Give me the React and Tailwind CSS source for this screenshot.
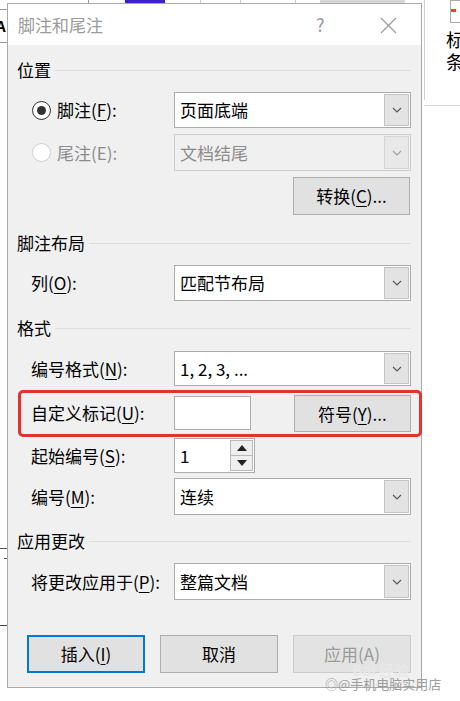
import React from "react";

const FONT = "font-[family-name:'Noto_Sans_CJK_SC','Noto_Sans',sans-serif]";

function U({ children }) {
  return <span className="underline decoration-1 underline-offset-[3px]">{children}</span>;
}

function Chevron({ disabled }) {
  return (
    <svg width="10" height="6" viewBox="0 0 10 6">
      <path d="M1 1 L5 5 L9 1" stroke={disabled ? "#a0a0a0" : "#555555"} fill="none" strokeWidth="1.1" />
    </svg>
  );
}

function Select({ text, disabled, h = "h-[36px]" }) {
  return (
    <div
      className={`relative flex ${h} w-[239px] items-center border pl-[5px] ${
        disabled ? "border-[#cdcdcd] bg-[#f0f0f0] text-[#8c8c8c]" : "border-[#ababab] bg-white text-black"
      }`}
    >
      <span>{text}</span>
      <div
        className={`absolute right-[1px] top-[1px] bottom-[1px] flex w-[25px] items-center justify-center border ${
          disabled ? "border-[#d4d4d4] bg-[#e8e8e8]" : "border-[#c4c4c4] bg-[#e3e3e3]"
        }`}
      >
        <Chevron disabled={disabled} />
      </div>
    </div>
  );
}

function Header({ children }) {
  return (
    <div className="flex h-[24px] items-center">
      <span className="leading-[24px] text-black">{children}</span>
      <div className="ml-[4px] h-px flex-1 bg-[#dcdcdc]" />
    </div>
  );
}

function Row({ label, children, mt, h }) {
  return (
    <div className={`flex items-center pl-[13px] ${mt} ${h}`}>
      <div className="w-[143px] shrink-0 text-black">{label}</div>
      {children}
    </div>
  );
}

function Btn({ children, className = "" }) {
  return (
    <div className={`flex items-center justify-center border border-[#adadad] bg-[#e1e1e1] text-black ${className}`}>
      {children}
    </div>
  );
}

export default function App() {
  return (
    <div className={`relative h-[701px] w-[460px] overflow-hidden bg-white text-[17px] ${FONT}`}>
      {/* background document behind dialog */}
      <div className="absolute left-[88px] top-0 h-[4px] w-px bg-[#9a9a9a]" />
      <div className="absolute left-[125px] top-0 h-[4px] w-[40px] bg-[#3b1fd1]" />
      <div className="absolute left-[200px] top-0 h-[4px] w-px bg-[#c8c8c8]" />
      <div className="absolute left-[240px] top-0 h-[4px] w-px bg-[#c8c8c8]" />
      <div className="absolute left-[295px] top-0 h-[4px] w-px bg-[#c8c8c8]" />
      <div className="absolute left-[320px] top-0 h-[3px] w-[85px] bg-[#d6d6d6]" />
      <div className="absolute left-0 top-[9px] h-px w-[8px] bg-[#9a9a9a]" />
      <div className="absolute left-0 top-[42px] h-px w-[8px] bg-[#9a9a9a]" />
      <div className="absolute left-[-4px] top-[16px] text-[15px] font-bold leading-[20px] text-black">A</div>
      <div className="absolute left-0 top-[548px] h-px w-[7px] bg-[#555]" />
      <div className="absolute left-[4px] top-[558px] h-px w-[3px] bg-[#555]" />
      <div className="absolute left-0 top-[625px] h-px w-[7px] bg-[#444]" />

      <div className="absolute left-[424px] top-0 h-[100px] w-px bg-[#d0d0d0]" />
      <div className="absolute left-[424px] top-[105px] h-px w-[40px] bg-[#d8d8d8]" />
      <div className="absolute left-[450px] top-0 h-[23px] w-[14px] border border-[#aaaaaa] bg-white" />
      <div className="absolute left-[451px] top-[9px] h-[3px] w-[5px] bg-[#e04a2a]" />
      <div className="absolute left-[446px] top-[28px] text-[18px] leading-[22px] text-black">标</div>
      <div className="absolute left-[446px] top-[50px] text-[18px] leading-[22px] text-black">条</div>

      {/* dialog window */}
      <div className="absolute left-[7px] top-[3px] flex h-[685px] w-[415px] flex-col border border-[#a9a9a9] bg-[#f0f0f0]">
        <div className="relative flex h-[41px] shrink-0 items-center bg-white pl-[10px]">
          <span className="text-[17px] text-[#9b9b9b]">脚注和尾注</span>
          <span className="absolute left-[308px] top-[8px] text-[18px] leading-[24px] text-[#9b9b9b]">?</span>
          <svg className="absolute left-[372px] top-[13px]" width="17" height="17" viewBox="0 0 17 17">
            <path d="M1 1 L16 16 M16 1 L1 16" stroke="#9b9b9b" strokeWidth="1.2" />
          </svg>
        </div>

        <div className="flex flex-1 flex-col px-[10px]">
          <div className="mt-[13px] -ml-px">
            <Header>位置</Header>
          </div>

          <div className="mt-[10px] flex h-[36px] items-center pl-[14px]">
            <div className="flex w-[142px] shrink-0 items-center">
              <div className="flex h-[19px] w-[19px] items-center justify-center rounded-full border-[1.5px] border-[#333333] bg-white">
                <div className="h-[9px] w-[9px] rounded-full bg-[#333333]" />
              </div>
              <span className="ml-[6px] text-black">
                脚注(<U>F</U>):
              </span>
            </div>
            <Select text="页面底端" />
          </div>

          <div className="mt-[6px] flex h-[37px] items-center pl-[14px]">
            <div className="flex w-[142px] shrink-0 items-center">
              <div className="h-[19px] w-[19px] rounded-full border border-[#d0d0d0] bg-white" />
              <span className="ml-[6px] text-[#8c8c8c]">尾注(E):</span>
            </div>
            <Select text="文档结尾" disabled h="h-[37px]" />
          </div>

          <div className="mt-[6px] flex h-[38px] justify-end pr-px">
            <Btn className="w-[117px]">
              转换(<U>C</U>)...
            </Btn>
          </div>

          <div className="mt-[16px] -ml-px">
            <Header>脚注布局</Header>
          </div>

          <Row mt="mt-[10px]" h="h-[36px]" label={<>列(<U>O</U>):</>}>
            <Select text="匹配节布局" />
          </Row>

          <div className="mt-[15px] -ml-px">
            <Header>格式</Header>
          </div>

          <Row mt="mt-[11px]" h="h-[35px]" label={<>编号格式(<U>N</U>):</>}>
            <Select text="1, 2, 3, ..." h="h-[35px]" />
          </Row>

          <div className="relative mt-[10px] flex h-[36px] items-start pl-[13px]">
            <div className="flex h-[34px] w-[143px] shrink-0 items-center text-black">
              自定义标记(<U>U</U>):
            </div>
            <div className="h-[34px] w-[77px] border border-[#ababab] bg-white" />
            <Btn className="ml-[43px] h-[37px] w-[118px] -mt-px">
              符号(<U>Y</U>)...
            </Btn>
            <div className="pointer-events-none absolute left-0 -right-[11px] -top-[6px] -bottom-[5px] rounded-[5px] border-[3px] border-[#e5322b]" />
          </div>

          <Row mt="mt-[6px]" h="h-[35px]" label={<>起始编号(<U>S</U>):</>}>
            <div className="relative flex h-[35px] w-[81px] items-center border border-[#ababab] bg-white pl-[5px]">
              <span>1</span>
              <div className="absolute right-[1px] top-[1px] bottom-[1px] flex w-[23px] flex-col border border-[#b9b9b9]">
                <div className="flex flex-1 items-center justify-center border-b border-[#b9b9b9] bg-[#efefef]">
                  <svg width="10" height="6" viewBox="0 0 10 6">
                    <path d="M0 6 L5 0 L10 6 Z" fill="#222222" />
                  </svg>
                </div>
                <div className="flex flex-1 items-center justify-center bg-[#efefef]">
                  <svg width="10" height="6" viewBox="0 0 10 6">
                    <path d="M0 0 L10 0 L5 6 Z" fill="#222222" />
                  </svg>
                </div>
              </div>
            </div>
          </Row>

          <Row mt="mt-[5px]" h="h-[37px]" label={<>编号(<U>M</U>):</>}>
            <Select text="连续" h="h-[37px]" />
          </Row>

          <div className="mt-[14px] -ml-px">
            <Header>应用更改</Header>
          </div>

          <Row mt="mt-[10px]" h="h-[37px]" label={<>将更改应用于(<U>P</U>):</>}>
            <Select text="整篇文档" h="h-[37px]" />
          </Row>

          <div className="mt-[35px] flex h-[38px] gap-[15px] pl-[9px]">
            <div className="flex w-[118px] items-center justify-center border-2 border-[#0078d7] bg-[#e1e1e1] text-black">
              插入(<U>I</U>)
            </div>
            <Btn className="w-[118px]">取消</Btn>
            <div className="flex w-[118px] items-center justify-center border border-[#cccccc] bg-[#e3e3e3] text-[#9a9a9a]">
              应用(A)
            </div>
          </div>
        </div>
      </div>

      {/* watermark */}
      <div className="pointer-events-none absolute left-[352px] top-[662px] text-[15px] font-bold leading-[16px] text-[#e8e8e8]">
        Bai 经验
      </div>
      <div className="pointer-events-none absolute left-[325px] top-[676px] text-[13px] leading-[16px] text-[#9d9d9d]">
        ◎@手机电脑实用店
      </div>
    </div>
  );
}
